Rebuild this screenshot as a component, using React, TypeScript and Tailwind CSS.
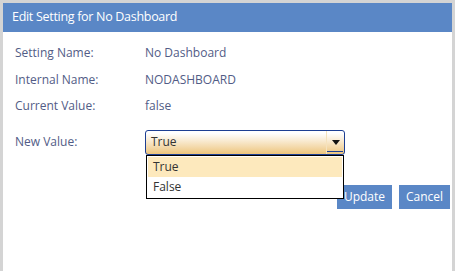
import { useState } from 'react'

const ROWS = [
  { label: 'Setting Name:', value: 'No Dashboard' },
  { label: 'Internal Name:', value: 'NODASHBOARD' },
  { label: 'Current Value:', value: 'false' },
]

const OPTIONS = ['True', 'False']

export default function App() {
  const [value, setValue] = useState('True')
  const [open, setOpen] = useState(true)

  return (
    <div
      className="w-[455px] h-[271px] bg-[#d4d4d4] pt-[3px] pl-[3px] pr-[3px] overflow-hidden"
      style={{ fontFamily: '"Open Sans", "Noto Sans", sans-serif' }}
    >
      <div className="h-full bg-white flex flex-col">
        {/* Header */}
        <div className="h-[29px] bg-[#5a87c6] flex items-center pl-[9px] text-[12.5px] tracking-[-0.3px] text-white">
          Edit Setting for No Dashboard
        </div>

        {/* Body */}
        <div className="pl-[12px] pt-[8px] text-[12px] text-[#525c86]">
          {ROWS.map(row => (
            <div key={row.label} className="flex h-[26.5px] items-center">
              <div className="w-[130px]">{row.label}</div>
              <div>{row.value}</div>
            </div>
          ))}

          <div className="flex items-center mt-[10px]">
            <div className="w-[130px]">New Value:</div>
            <div className="relative">
              <button
                onClick={() => setOpen(!open)}
                className="w-[200px] h-[25px] flex items-center border border-[#1d3f93] rounded-[3px] bg-gradient-to-b from-white from-10% to-[#edc57c] text-left"
              >
                <span className="flex-1 pl-[5px] text-[#333]">{value}</span>
                <span className="relative w-[18px] h-full flex items-center justify-center border-l border-[#f5e2bd]">
                  <svg width="8" height="5" viewBox="0 0 8 5">
                    <path d="M0 0H8L4 5Z" fill="#111" />
                  </svg>
                  <span className="absolute left-0 right-[1px] bottom-[2px] h-[1px] bg-[#1d3f93]" />
                </span>
              </button>

              {open && (
                <div className="absolute left-[1px] top-[25px] w-[198px] border border-black bg-white z-10 p-px">
                  {OPTIONS.map(opt => (
                    <div
                      key={opt}
                      onClick={() => {
                        setValue(opt)
                        setOpen(false)
                      }}
                      className={`h-[20px] flex items-center pl-[5px] text-[#333] ${
                        opt === value ? 'bg-[#fde9bd]' : ''
                      }`}
                    >
                      {opt}
                    </div>
                  ))}
                </div>
              )}
            </div>
          </div>
        </div>

        {/* Actions */}
        <div className="flex justify-end gap-[7px] pr-[2px] mt-[30px]">
          <button className="w-[55px] h-[24px] bg-[#5a87c6] text-white text-[12px]">Update</button>
          <button className="w-[51px] h-[24px] bg-[#5a87c6] text-white text-[12px]">Cancel</button>
        </div>
      </div>
    </div>
  )
}
